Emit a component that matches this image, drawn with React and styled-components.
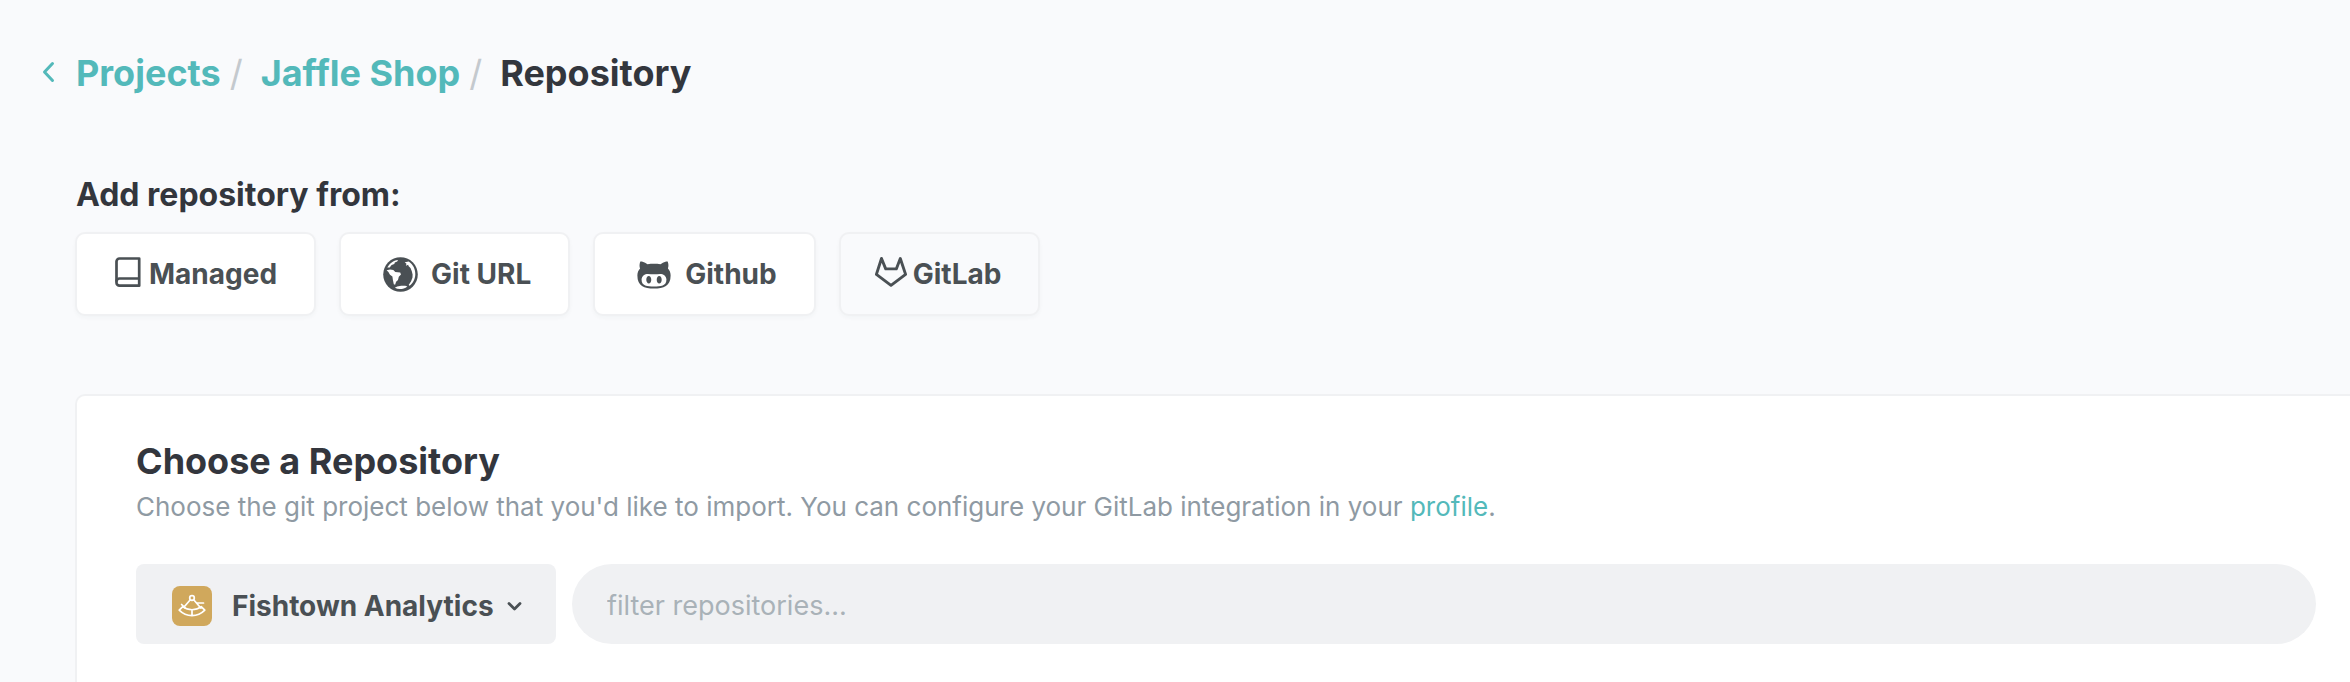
import React from "react";
import styled, { createGlobalStyle } from "styled-components";
import { VscOctoface } from "react-icons/vsc";

const color = {
  page: "#f9fafc",
  line: "#f0f1f3",
  teal: "#53b9ba",
  ink: "#33363d",
  button: "#4a5054",
  muted: "#8f9aa3",
  placeholder: "#a9b2b8",
  slash: "#c4c9ce",
  gold: "#d0a85c",
};

const GlobalStyle = createGlobalStyle`
  *, *::before, *::after { box-sizing: border-box; }
  body {
    margin: 0;
    background: ${color.page};
    color: ${color.ink};
    font-family: Inter, "Liberation Sans", sans-serif;
  }
`;

const Page = styled.main`
  display: flex;
  flex-direction: column;
  min-height: 100vh;
  padding: 51px 0 0 75px;
`;

const Breadcrumb = styled.nav`
  display: flex;
  align-items: center;
  margin-left: -34px;
  font-size: 36px;
  font-weight: 700;
  line-height: 44px;
`;

const CrumbLink = styled.a`
  color: ${color.teal};
  text-decoration: none;
`;

const BackLink = styled(CrumbLink)`
  display: flex;
  margin-right: 20px;
`;

const Slash = styled.span`
  margin: 0 18px 0 9px;
  color: ${color.slash};
  font-weight: 400;
`;

const SectionTitle = styled.h2`
  margin: 80px 0 17px;
  padding-left: 1px;
  font-size: 32px;
  font-weight: 700;
  line-height: 40px;
`;

const SourceList = styled.div`
  display: flex;
  flex-wrap: wrap;
  gap: 23px;
`;

const SourceButton = styled.button`
  display: flex;
  align-items: center;
  height: 84px;
  padding: 0 37px 0 34px;
  border: 2px solid ${color.line};
  border-radius: 10px;
  background: ${(p) => (p.$selected ? color.page : "#fff")};
  box-shadow: 0 2px 4px rgba(40, 50, 60, 0.03);
  color: ${color.button};
  font: 700 28px/36px Inter, "Liberation Sans", sans-serif;
  cursor: pointer;
`;

const IconSlot = styled.span`
  display: flex;
  flex: none;
  justify-content: center;
  width: ${(p) => (p.$wide ? 50 : 34)}px;
  margin-right: ${(p) => (p.$wide ? 6 : 4)}px;
`;

const Card = styled.section`
  flex: 1;
  margin-top: 78px;
  padding: 43px 34px 38px 59px;
  border: solid ${color.line};
  border-width: 2px 0 0 2px;
  border-radius: 10px 0 0 0;
  background: #fff;
`;

const CardTitle = styled.h1`
  margin: 0 0 8px;
  font-size: 36px;
  font-weight: 700;
  line-height: 44px;
`;

const Description = styled.p`
  margin: 0 0 41px;
  color: ${color.muted};
  font-size: 26px;
  line-height: 32px;
`;

const TextLink = styled.a`
  color: ${color.teal};
  text-decoration: none;
`;

const FilterRow = styled.div`
  display: flex;
  gap: 16px;
`;

const AccountPicker = styled.label`
  position: relative;
  flex: none;
  width: 420px;
  color: ${color.button};
`;

const AccountSelect = styled.select`
  appearance: none;
  width: 100%;
  height: 80px;
  padding: 3px 50px 0 96px;
  border: 0;
  border-radius: 8px;
  background: ${color.line};
  color: inherit;
  font: 700 28px/36px Inter, "Liberation Sans", sans-serif;
`;

const Avatar = styled.span`
  position: absolute;
  top: 22px;
  left: 36px;
  display: flex;
  border-radius: 8px;
  background: ${color.gold};
  pointer-events: none;
`;

const Caret = styled.span`
  position: absolute;
  top: 34px;
  right: 33px;
  display: flex;
  pointer-events: none;
`;

const FilterInput = styled.input`
  flex: 1;
  min-width: 0;
  height: 80px;
  padding: 3px 35px 0;
  border: 0;
  border-radius: 40px;
  background: ${color.line};
  color: ${color.button};
  font: 400 27px/36px Inter, "Liberation Sans", sans-serif;

  &::placeholder {
    color: ${color.placeholder};
    opacity: 1;
  }
`;

const BackIcon = () => (
  <svg width="15" height="24" viewBox="0 0 15 24" fill="none" stroke="currentColor" strokeWidth="3" strokeLinecap="round" strokeLinejoin="round" aria-hidden="true">
    <path d="M11.500 2.500 3.500 11l8 8.500" />
  </svg>
);

const BookIcon = () => (
  <svg width="34" height="34" viewBox="0 0 34 34" fill="none" stroke="currentColor" strokeWidth="2.700" strokeLinejoin="round" aria-hidden="true">
    <path d="M28.200 1.500H8.500a3 3 0 0 0-3 3v21.200a3 3 0 0 0 3 3h19.700z" />
    <path d="M5.500 24.500a3 3 0 0 1 3-3h19.700" />
  </svg>
);

const EarthIcon = () => (
  <svg width="35" height="35" viewBox="0 0 35 35" aria-hidden="true">
    <circle cx="17.500" cy="17.500" r="17.300" fill="currentColor" />
    <g fill="#fff">
      <path d="M4.300 10.600C6.500 6.300 10.300 3.500 15 2.900l-.8 1.700-2.400.8-.5 1.700-2.700 1-1.900 2.300z" />
      <path d="M3.600 13.300l3.500-.9 3.200.7 2 1.800 4.900.5.8 2.100-2.200 2.300-.8 3.300-1.900 1.700-1 3-1.300-.6-.9-4.200-.5-3.600-2.400-1.700-1.600-2.600z" />
      <path d="M21.700 5.200l4.100-.7C30 7.300 32.400 12 32.300 17.200c0 4.600-2.300 8.900-5.700 11.500l-.9-.6 2.400-3.900 1.400-3.800.1-2.800-.8-3.400-1.300-3.300-1.800-1.600-.6-1.600-2.200 1 .6-2z" />
      <path d="M11.800 30.800l2.400-1.300 4-.7 4.100-.1 2.100.7C20.500 32.400 15.800 32.900 11.800 30.800z" />
    </g>
  </svg>
);

const GitLabIcon = () => (
  <svg width="34" height="34" viewBox="0 0 34 34" fill="none" stroke="currentColor" strokeWidth="2.900" strokeLinejoin="round" aria-hidden="true">
    <path d="M16 28.300 1.400 17.400 6.500 1.500l4.200 10.400h10.600L25.300 1.500l5.300 15.900z" />
  </svg>
);

const SextantIcon = () => (
  <svg width="40" height="40" viewBox="0 0 40 40" fill="none" stroke="#fff" strokeWidth="1.700" strokeLinecap="round" strokeLinejoin="round" aria-hidden="true">
    <circle cx="20" cy="12" r="2.300" />
    <path d="M18.300 13.800 12.500 20.500M21.700 13.800l7.300 8.400M9.600 18.500l3.200 3.200M25.300 17h6.200" />
    <path d="M10.800 20.600c5.400 4.200 13 4.200 18.400 0l3.600 3.600c-7.200 7.300-18.400 7.300-25.600 0zM20 23.800v5.700" />
  </svg>
);

const CaretIcon = () => (
  <svg width="18" height="14" viewBox="0 0 18 14" fill="none" stroke="currentColor" strokeWidth="2.800" strokeLinecap="round" strokeLinejoin="round" aria-hidden="true">
    <path d="M4 5.500l5.500 5.500L15 5.500" />
  </svg>
);

const sources = [
  { name: "Managed", icon: <BookIcon /> },
  { name: "Git URL", icon: <EarthIcon />, wide: true },
  { name: "Github", icon: <VscOctoface size={38} aria-hidden="true" />, wide: true },
  { name: "GitLab", icon: <GitLabIcon />, selected: true },
];

export default function App() {
  return (
    <Page>
      <GlobalStyle />
      <Breadcrumb aria-label="Breadcrumb">
        <BackLink href="#back" aria-label="Back">
          <BackIcon />
        </BackLink>
        <CrumbLink href="#projects">Projects</CrumbLink>
        <Slash>/</Slash>
        <CrumbLink href="#jaffle-shop">Jaffle Shop</CrumbLink>
        <Slash>/</Slash>
        <span aria-current="page">Repository</span>
      </Breadcrumb>

      <SectionTitle>Add repository from:</SectionTitle>
      <SourceList>
        {sources.map((s) => (
          <SourceButton key={s.name} type="button" $selected={s.selected} aria-pressed={!!s.selected}>
            <IconSlot $wide={s.wide}>{s.icon}</IconSlot>
            {s.name}
          </SourceButton>
        ))}
      </SourceList>

      <Card>
        <CardTitle>Choose a Repository</CardTitle>
        <Description>
          Choose the git project below that you'd like to import. You can configure your GitLab
          integration in your <TextLink href="#profile">profile</TextLink>.
        </Description>
        <FilterRow>
          <AccountPicker>
            <AccountSelect aria-label="Account">
              <option>Fishtown Analytics</option>
            </AccountSelect>
            <Avatar>
              <SextantIcon />
            </Avatar>
            <Caret>
              <CaretIcon />
            </Caret>
          </AccountPicker>
          <FilterInput type="text" aria-label="Filter repositories" placeholder="filter repositories..." />
        </FilterRow>
      </Card>
    </Page>
  );
}
